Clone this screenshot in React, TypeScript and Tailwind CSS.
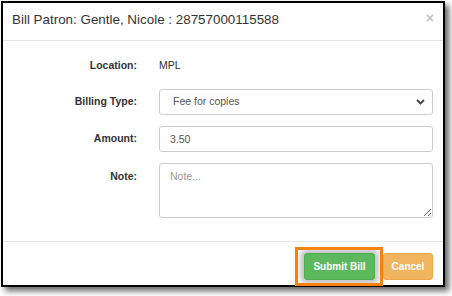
import { useState } from "react";

function Chevron() {
  return (
    <svg width="9" height="6" viewBox="0 0 9 6" className="pointer-events-none absolute right-[8px] top-[10px]">
      <path d="M1 1l3.5 3.5L8 1" fill="none" stroke="#444" strokeWidth="1.8" />
    </svg>
  );
}

export default function App() {
  const [type, setType] = useState("copies");
  const [amount, setAmount] = useState("3.50");

  return (
    <div className="h-[296px] w-[452px] bg-white font-['Liberation_Sans',Arial,sans-serif] text-[#333]">
      <div className="ml-[1px] pt-[1px]">
        <div className="flex h-[286px] w-[444px] flex-col border-2 border-black bg-white shadow-[4px_4px_6px_rgba(0,0,0,0.6)]">
          <div className="relative flex h-[38px] items-center border-b border-[#e5e5e5] pl-[9px] pb-[2px] text-[13.4px]">
            Bill Patron: Gentle, Nicole : 28757000115588
            <span className="absolute right-[9px] top-[5px] text-[14px] font-bold text-[#c4c4c4]">×</span>
          </div>

          <div className="flex h-[200px] flex-col pt-[12px] text-[10.5px]">
            <div className="flex h-[26px] items-center">
              <div className="w-[134px] text-right font-bold">Location:</div>
              <div className="ml-[22px] text-[#333]">MPL</div>
            </div>

            <div className="mt-[10px] flex h-[26px] items-center">
              <div className="w-[134px] text-right font-bold">Billing Type:</div>
              <div className="relative ml-[22px] h-[26px] w-[274px]">
                <select
                  value={type}
                  onChange={(e) => setType(e.target.value)}
                  className="h-full w-full appearance-none rounded-[3px] border border-[#ccc] bg-white pl-[13px] text-[10.5px] text-[#555] outline-none"
                >
                  <option value="copies">Fee for copies</option>
                  <option value="misc">Miscellaneous</option>
                </select>
                <Chevron />
              </div>
            </div>

            <div className="mt-[11px] flex h-[26px] items-center">
              <div className="w-[134px] text-right font-bold">Amount:</div>
              <input
                value={amount}
                onChange={(e) => setAmount(e.target.value)}
                className="ml-[22px] h-[26px] w-[274px] rounded-[3px] border border-[#ccc] px-[10px] text-[10.5px] text-[#555] outline-none"
              />
            </div>

            <div className="mt-[11px] flex h-[55px] items-start">
              <div className="w-[134px] pt-[6px] text-right font-bold">Note:</div>
              <textarea
                placeholder="Note..."
                className="ml-[22px] h-[55px] w-[274px] rounded-[3px] border border-[#ccc] px-[10px] py-[5px] text-[10.5px] text-[#555] outline-none placeholder:text-[#999]"
              />
            </div>
          </div>

          <div className="flex h-[44px] items-start justify-end border-t border-[#e5e5e5] pt-[11px] pr-[10px]">
            <div className="relative">
              <button className="h-[27px] w-[71px] rounded-[3px] border border-[#4cae4c] bg-[#5cb85c] text-[10px] font-bold text-white shadow-[0_0_4px_4px_rgba(0,0,0,0.22)]">
                Submit Bill
              </button>
              <div className="pointer-events-none absolute -bottom-[6px] -left-[9px] -right-[8px] -top-[6px] border-[3px] border-[#f8820f]" />
            </div>
            <button className="ml-[8px] h-[27px] w-[50px] rounded-[3px] border border-[#eea236] bg-[#f0ad4e] text-[10px] font-bold text-white opacity-90">
              Cancel
            </button>
          </div>
        </div>
      </div>
    </div>
  );
}
